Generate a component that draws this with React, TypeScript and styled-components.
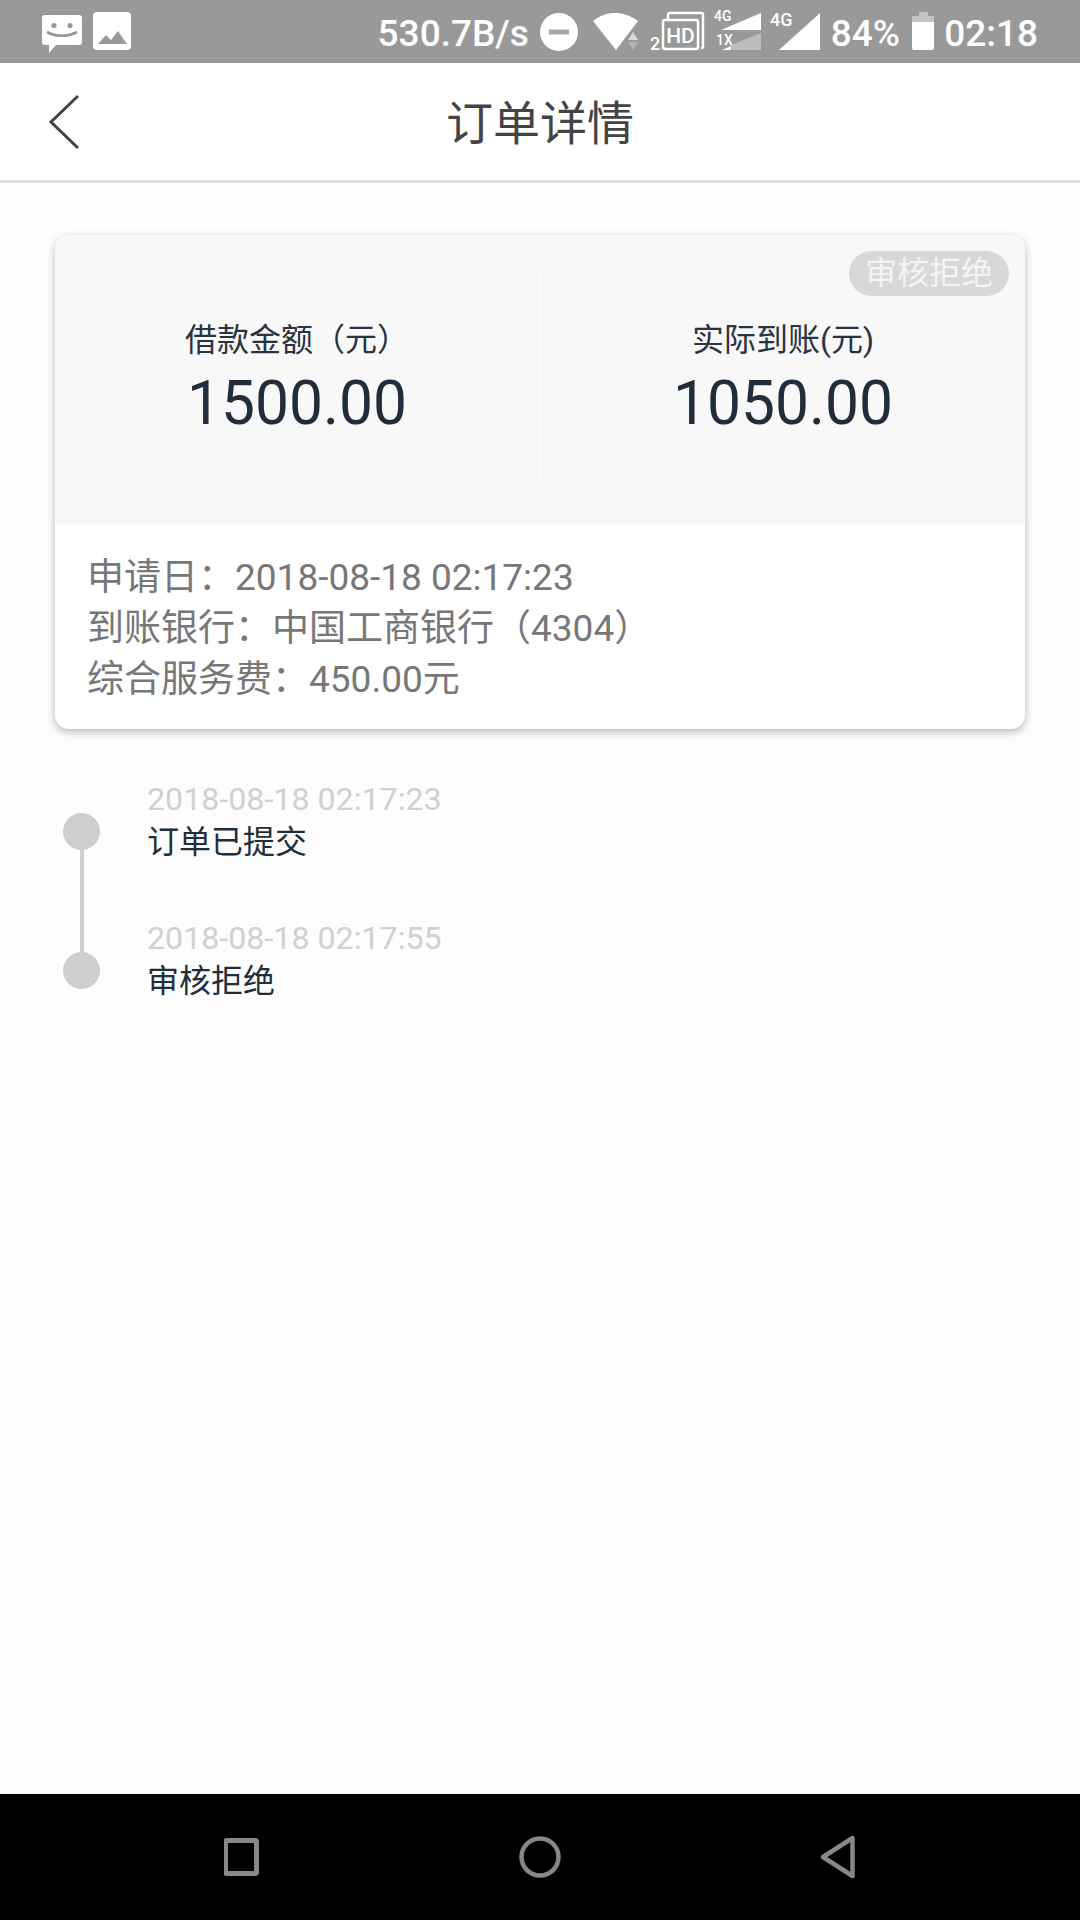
import styled, { createGlobalStyle } from "styled-components";

const GlobalStyle = createGlobalStyle`
  html, body {
    margin: 0;
    padding: 0;
    background: #fdfdfd;
  }
  * {
    box-sizing: border-box;
  }
`;

const Page = styled.div`
  width: 1080px;
  height: 1920px;
  display: flex;
  flex-direction: column;
  background: #fdfdfd;
  font-family: Roboto, "Noto Sans CJK SC", sans-serif;
  overflow: hidden;
`;

const StatusBar = styled.div`
  height: 63px;
  flex: none;
  display: flex;
  align-items: flex-start;
  justify-content: space-between;
  padding: 0 42px 0 42px;
  background: #999999;
`;

const StatusGroup = styled.div`
  display: flex;
  align-items: flex-start;
`;

const StatusText = styled.span<{ $gap?: number }>`
  height: 63px;
  line-height: 67px;
  font-size: 37px;
  font-weight: 500;
  color: #ffffff;
  margin-right: ${(p) => p.$gap ?? 0}px;
  white-space: nowrap;
`;

const StatusIcon = styled.svg<{ $gap?: number }>`
  display: block;
  flex: none;
  margin-right: ${(p) => p.$gap ?? 0}px;
`;

const NavBar = styled.header`
  height: 120px;
  flex: none;
  display: flex;
  align-items: center;
  justify-content: center;
  position: relative;
  background: #ffffff;
  border-bottom: 3px solid #dddddd;
`;

const BackButton = styled.svg`
  position: absolute;
  left: 48px;
  top: 31px;
`;

const NavTitle = styled.h1`
  margin: 4px 0 0;
  font-size: 47px;
  font-weight: 400;
  color: #444444;
  line-height: 66px;
`;

const Main = styled.main`
  flex: 1;
  padding: 52px 55px 0;
`;

const Card = styled.section`
  position: relative;
  height: 494px;
  border-radius: 14px;
  background: #ffffff;
  overflow: hidden;
  box-shadow: 0 3px 8px rgba(0, 0, 0, 0.28);
`;

const Badge = styled.span`
  position: absolute;
  top: 16px;
  right: 16px;
  width: 160px;
  height: 45px;
  border-radius: 23px;
  background: #d8d8d8;
  color: #f4f4f4;
  font-size: 32px;
  line-height: 44px;
  text-align: center;
`;

const Amounts = styled.div`
  height: 289px;
  display: grid;
  grid-template-columns: 1fr 2px 1fr;
  padding-top: 38px;
  background: #f8f8f9;
`;

const AmountColumn = styled.div`
  display: flex;
  flex-direction: column;
  align-items: center;
  padding-top: 45px;
`;

const AmountLabel = styled.div`
  font-size: 32px;
  line-height: 44px;
  color: #2a3341;
`;

const AmountValue = styled.div`
  font-size: 60.5px;
  line-height: 70px;
  margin-top: 7px;
  color: #222d3c;
`;

const Divider = styled.div`
  width: 2px;
  height: 213px;
  margin-left: -1px;
  background: #fcfcfc;
`;

const Details = styled.div`
  padding: 28px 32px 0;
`;

const DetailRow = styled.div`
  font-size: 37px;
  line-height: 51px;
  color: #777777;
  white-space: nowrap;
`;

const Timeline = styled.ol`
  list-style: none;
  margin: 0;
  padding: 49px 0 0 8px;
`;

const Step = styled.li`
  height: 139px;
  display: flex;
  gap: 47px;
`;

const Marker = styled.div<{ $last?: boolean }>`
  width: 37px;
  flex: none;
  position: relative;
  padding-top: 35px;

  &::after {
    content: "";
    display: ${(p) => (p.$last ? "none" : "block")};
    position: absolute;
    left: 17px;
    top: 70px;
    width: 4px;
    height: 106px;
    background: #cfcfcf;
  }
`;

const Dot = styled.div`
  width: 37px;
  height: 37px;
  border-radius: 50%;
  background: #cecece;
`;

const StepBody = styled.div`
  display: flex;
  flex-direction: column;
`;

const StepTime = styled.div`
  font-size: 32.2px;
  line-height: 42px;
  color: #d0d0d0;
  white-space: nowrap;
`;

const StepTitle = styled.div`
  font-size: 32px;
  line-height: 44px;
  color: #222d3c;
`;

const SystemNav = styled.footer`
  height: 126px;
  flex: none;
  display: grid;
  grid-template-columns: repeat(3, 298px);
  justify-content: center;
  align-items: center;
  justify-items: center;
  background: #000000;
`;

const ChatIcon = () => (
  <StatusIcon $gap={11} width="40" height="63" viewBox="0 0 40 63">
    <path d="M3 15h34a3 3 0 0 1 3 3v24a3 3 0 0 1-3 3H14l-7 8v-8H3a3 3 0 0 1-3-3V18a3 3 0 0 1 3-3z" fill="#fff" />
    <circle cx="12" cy="25.5" r="2.6" fill="#999" />
    <circle cx="28" cy="25.5" r="2.6" fill="#999" />
    <path d="M5 32c9 5 21 5 30 0" fill="none" stroke="#999" strokeWidth="2.6" />
  </StatusIcon>
);

const ImageIcon = () => (
  <StatusIcon width="38" height="63" viewBox="0 0 38 63">
    <rect x="0" y="12" width="38" height="38" rx="4" fill="#fff" />
    <path d="M5 44l8-9 5 5 7-9 9 13z" fill="#999" />
  </StatusIcon>
);

const DndIcon = () => (
  <StatusIcon $gap={15} width="38" height="63" viewBox="0 0 38 63">
    <circle cx="19" cy="32" r="19" fill="#fff" />
    <rect x="9" y="29.5" width="20" height="5" fill="#a8a8a8" />
  </StatusIcon>
);

const WifiIcon = () => (
  <StatusIcon $gap={12} width="45" height="63" viewBox="0 0 45 63">
    <path d="M0 21C7 15.500 14 13 22 13s15 2.500 23 8L23 50z" fill="#fff" />
    <path d="M40 32l5 8H35z" fill="#d8d8d8" />
    <path d="M35 42h10l-5 8z" fill="#b4b4b4" />
  </StatusIcon>
);

const HdIcon = () => (
  <StatusIcon $gap={9} width="55" height="63" viewBox="0 0 55 63">
    <text x="0" y="50" fontFamily="Roboto" fontWeight="500" fontSize="18" fill="#fff">
      2
    </text>
    <path d="M18 19v-4a2 2 0 0 1 2-2h31a2 2 0 0 1 2 2v31a2 2 0 0 1-2 2" fill="none" stroke="#fff" strokeWidth="2.500" />
    <rect x="13" y="20" width="35" height="29" rx="2" fill="#999" stroke="#fff" strokeWidth="2.500" />
    <text x="30.500" y="43" textAnchor="middle" fontFamily="Roboto" fontWeight="500" fontSize="21" fill="#fff">
      HD
    </text>
  </StatusIcon>
);

const DualSignalIcon = () => (
  <StatusIcon $gap={9} width="47" height="63" viewBox="0 0 47 63">
    <text x="0" y="21" fontFamily="Roboto" fontWeight="500" fontSize="14" fill="#fff">
      4G
    </text>
    <path d="M7 30l40-17v17z" fill="#fff" />
    <text x="2" y="45" fontFamily="Roboto" fontWeight="500" fontSize="14" fill="#fff">
      1X
    </text>
    <path d="M17 45l30-12v17H17z" fill="#bcbcbc" />
    <path d="M8 50l9-4v4z" fill="#fff" />
  </StatusIcon>
);

const SignalIcon = () => (
  <StatusIcon $gap={11} width="50" height="63" viewBox="0 0 50 63">
    <text x="0" y="26" fontFamily="Roboto" fontWeight="500" fontSize="18" fill="#fff">
      4G
    </text>
    <path d="M9 50l41-37v37z" fill="#fff" />
  </StatusIcon>
);

const BatteryIcon = () => (
  <StatusIcon $gap={10} width="22" height="63" viewBox="0 0 22 63">
    <path d="M7 12h9v4h4a2 2 0 0 1 2 2v30a2 2 0 0 1-2 2H2a2 2 0 0 1-2-2V18a2 2 0 0 1 2-2h5z" fill="#fff" />
    <path d="M7 12h9v4h4a2 2 0 0 1 2 2v4H0v-4a2 2 0 0 1 2-2h5z" fill="#c4c4c4" />
  </StatusIcon>
);

export default function App() {
  return (
    <Page>
      <GlobalStyle />
      <StatusBar>
        <StatusGroup>
          <ChatIcon />
          <ImageIcon />
        </StatusGroup>
        <StatusGroup>
          <StatusText $gap={11}>530.7B/s</StatusText>
          <DndIcon />
          <WifiIcon />
          <HdIcon />
          <DualSignalIcon />
          <SignalIcon />
          <StatusText $gap={12}>84%</StatusText>
          <BatteryIcon />
          <StatusText>02:18</StatusText>
        </StatusGroup>
      </StatusBar>
      <NavBar>
        <BackButton width="32" height="56" viewBox="0 0 32 56">
          <path d="M30 2 3 28l27 26" fill="none" stroke="#444444" strokeWidth="3" />
        </BackButton>
        <NavTitle>订单详情</NavTitle>
      </NavBar>
      <Main>
        <Card>
          <Badge>审核拒绝</Badge>
          <Amounts>
            <AmountColumn>
              <AmountLabel>借款金额（元）</AmountLabel>
              <AmountValue>1500.00</AmountValue>
            </AmountColumn>
            <Divider />
            <AmountColumn>
              <AmountLabel>实际到账(元)</AmountLabel>
              <AmountValue>1050.00</AmountValue>
            </AmountColumn>
          </Amounts>
          <Details>
            <DetailRow>申请日：2018-08-18 02:17:23</DetailRow>
            <DetailRow>到账银行：中国工商银行（4304）</DetailRow>
            <DetailRow>综合服务费：450.00元</DetailRow>
          </Details>
        </Card>
        <Timeline>
          <Step>
            <Marker>
              <Dot />
            </Marker>
            <StepBody>
              <StepTime>2018-08-18 02:17:23</StepTime>
              <StepTitle>订单已提交</StepTitle>
            </StepBody>
          </Step>
          <Step>
            <Marker $last>
              <Dot />
            </Marker>
            <StepBody>
              <StepTime>2018-08-18 02:17:55</StepTime>
              <StepTitle>审核拒绝</StepTitle>
            </StepBody>
          </Step>
        </Timeline>
      </Main>
      <SystemNav>
        <svg width="36" height="38" viewBox="0 0 36 38">
          <rect x="1.500" y="2.500" width="31" height="33" rx="1.500" fill="none" stroke="#888888" strokeWidth="5" />
        </svg>
        <svg width="42" height="42" viewBox="0 0 42 42">
          <circle cx="21" cy="21" r="18.500" fill="none" stroke="#888888" strokeWidth="4.500" />
        </svg>
        <svg width="38" height="44" viewBox="0 0 38 44">
          <path d="M33.500 3v38L4 22z" fill="none" stroke="#888888" strokeWidth="4.500" strokeLinejoin="round" />
        </svg>
      </SystemNav>
    </Page>
  );
}
